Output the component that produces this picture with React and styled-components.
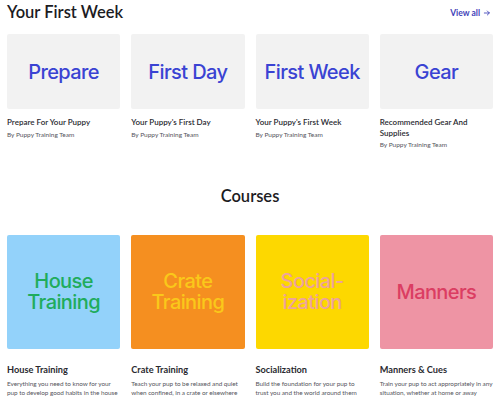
import React from 'react';
import styled, { createGlobalStyle } from 'styled-components';

const GlobalStyle = createGlobalStyle`
  html, body {
    margin: 0;
    padding: 0;
    background: #ffffff;
    font-family: 'Lato', 'Inter', sans-serif;
    color: #1c1c1f;
  }
  * { box-sizing: border-box; }
`;

const Page = styled.div`
  width: 500px;
  height: 400px;
  overflow: hidden;
  padding: 0 7px;
`;

const SectionHeader = styled.div`
  display: flex;
  align-items: flex-end;
  justify-content: space-between;
  height: 25px;
  padding-bottom: 3px;
`;

const Heading = styled.h2`
  margin: 0;
  font-size: 16.5px;
  font-weight: 600;
  line-height: 20px;
`;

const ViewAll = styled.a`
  display: flex;
  align-items: center;
  gap: 3px;
  font-size: 8.5px;
  font-weight: 700;
  color: #3f43b8;
  text-decoration: none;
  margin-bottom: 4px;
  margin-right: 2px;
`;

const Grid = styled.div`
  display: grid;
  grid-template-columns: repeat(4, 1fr);
  column-gap: 11px;
  margin-top: ${(p) => p.top || 0}px;
`;

const Card = styled.div`
  display: flex;
  flex-direction: column;
`;

const Thumb = styled.div`
  height: ${(p) => p.h}px;
  background: ${(p) => p.bg};
  color: ${(p) => p.fg};
  border-radius: 2px;
  display: flex;
  align-items: center;
  justify-content: center;
  text-align: center;
  font-family: 'Inter', sans-serif;
  font-size: ${(p) => p.size || 20}px;
  font-weight: 500;
  line-height: 24px;
  letter-spacing: -0.6px;
`;

const ThumbLine = styled.div`
  height: 21px;
  line-height: 21px;
`;

const CardTitle = styled.div`
  margin-top: ${(p) => p.top || 8}px;
  font-size: ${(p) => p.size || 8}px;
  font-weight: ${(p) => p.weight || 600};
  line-height: ${(p) => p.lh || 10.5}px;
  color: #2a2a30;
`;

const Byline = styled.div`
  margin-top: 3px;
  font-size: 6.5px;
  color: #55555c;
`;

const Description = styled.div`
  margin-top: 3px;
  font-size: 6.4px;
  letter-spacing: -0.05px;
  line-height: 9px;
  color: #55555c;
`;

const CoursesHeading = styled.h2`
  margin: 0;
  margin-top: 38px;
  text-align: center;
  font-size: 16.5px;
  font-weight: 600;
  line-height: 20px;
`;

const weeks = [
  { thumb: 'Prepare', title: 'Prepare For Your Puppy' },
  { thumb: 'First Day', title: "Your Puppy's First Day" },
  { thumb: 'First Week', title: "Your Puppy's First Week" },
  { thumb: 'Gear', title: 'Recommended Gear And Supplies' },
];

const courses = [
  {
    thumb: ['House', 'Training'],
    bg: '#93d2fa',
    fg: '#20ac5c',
    title: 'House Training',
    desc: 'Everything you need to know for your pup to develop good habits in the house',
  },
  {
    thumb: ['Crate', 'Training'],
    bg: '#f58f20',
    fg: '#fac81a',
    title: 'Crate Training',
    desc: 'Teach your pup to be relaxed and quiet when confined, in a crate or elsewhere',
  },
  {
    thumb: ['Social-', 'ization'],
    bg: '#fdd800',
    fg: '#eda39c',
    title: 'Socialization',
    desc: 'Build the foundation for your pup to trust you and the world around them',
  },
  {
    thumb: ['Manners'],
    bg: '#ee94a4',
    fg: '#db3d62',
    title: 'Manners & Cues',
    desc: 'Train your pup to act appropriately in any situation, whether at home or away',
  },
];

const Arrow = () => (
  <svg width="8" height="8" viewBox="0 0 24 24" fill="none" stroke="currentColor" strokeWidth="2.6" strokeLinecap="round" strokeLinejoin="round">
    <path d="M4 12h15M13 6l6 6-6 6" />
  </svg>
);

export default function App() {
  return (
    <Page>
      <GlobalStyle />
      <SectionHeader>
        <Heading>Your First Week</Heading>
        <ViewAll href="#">View all <Arrow /></ViewAll>
      </SectionHeader>
      <Grid top={9}>
        {weeks.map((w) => (
          <Card key={w.title}>
            <Thumb h={75} bg="#f2f2f2" fg="#3a43d3">{w.thumb}</Thumb>
            <CardTitle>{w.title}</CardTitle>
            <Byline>By Puppy Training Team</Byline>
          </Card>
        ))}
      </Grid>
      <CoursesHeading>Courses</CoursesHeading>
      <Grid top={29}>
        {courses.map((c) => (
          <Card key={c.title}>
            <Thumb h={114} bg={c.bg} fg={c.fg} size={20}>
              <div>
                {c.thumb.map((line) => (
                  <ThumbLine key={line}>{line}</ThumbLine>
                ))}
              </div>
            </Thumb>
            <CardTitle top={15} size={9.2} weight={700} lh={12}>{c.title}</CardTitle>
            <Description>{c.desc}</Description>
          </Card>
        ))}
      </Grid>
    </Page>
  );
}
